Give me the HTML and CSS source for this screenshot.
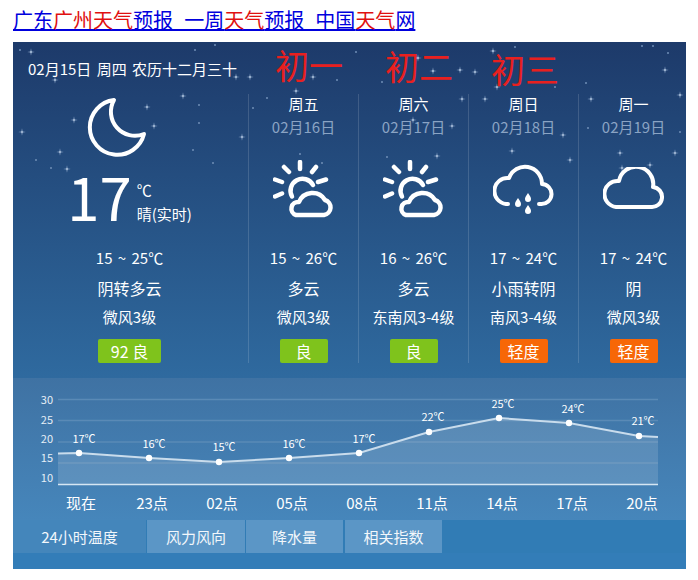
FILE: index.html
```html
<!DOCTYPE html>
<html lang="zh-CN">
  <head>
    <meta charset="utf-8" />
    <meta name="viewport" content="width=device-width, initial-scale=1" />
    <title>广东广州天气预报</title>
    <link rel="stylesheet" href="styles.css">
  </head>
  <body>
    <!-- Page title -->
    <h1 class="page-title">
      <a href="#">广东<em>广州天气</em>预报_一周<em>天气</em>预报_中国<em>天气</em>网</a>
    </h1>

    <svg class="icon-defs" width="0" height="0" aria-hidden="true">
      <defs>
        <symbol id="star" viewBox="-5 -5 10 10" overflow="visible">
          <path d="M0 -3.800L.6 -.6L3.800 0L.6 .6L0 3.800L-.6 .6L-3.800 0L-.6 -.6Z" fill="#8fa8ca" />
          <circle r="1" fill="#a6bbd6" />
        </symbol>
        <symbol id="dot" viewBox="-2 -2 4 4" overflow="visible">
          <circle r="1" fill="#6f8eb6" />
        </symbol>
        <symbol id="sun-cloud" viewBox="0 0 62 60">
          <g fill="none" stroke="#fff" stroke-width="4.500" stroke-linecap="round" stroke-linejoin="round">
            <path d="M27 2V9M11 7L16 12M43 7L39 12M2 19.500L9 22M53 19.500L45 22M2 36.500L9 33.500" />
            <path d="M19 36.500A11 11 0 1 1 40 25" />
            <path d="M23 55H51A7.700 7.700 0 0 0 52 40A14.600 14.600 0 0 0 26 42A6.700 6.700 0 0 0 23 55Z" />
          </g>
        </symbol>
        <symbol id="rain-cloud" viewBox="0 0 62 60">
          <g fill="none" stroke="#fff" stroke-width="4" stroke-linecap="round" stroke-linejoin="round">
            <path d="M15 40H13A13 13 0 0 1 16 14A17 17 0 0 1 49 20A10 10 0 0 1 48 40H46" />
          </g>
          <path d="M25 34C23 37 22 38 22 40A3 3 0 0 0 28 40C28 38 27 37 25 34ZM35 29C33 32 32 33 32 35A3 3 0 0 0 38 35C38 33 37 32 35 29ZM35 41C33 44 32 45 32 47A3 3 0 0 0 38 47C38 45 37 44 35 41Z" fill="#fff" />
        </symbol>
        <symbol id="cloud" viewBox="0 0 62 60">
          <path d="M13 40H48A10 10 0 0 0 50 20A17 17 0 0 0 16 14A13 13 0 0 0 13 40Z" fill="none" stroke="#fff" stroke-width="4" stroke-linejoin="round" />
        </symbol>
      </defs>
    </svg>

    <div class="weather">
      <!-- Today and the next four days -->
      <section class="forecast">
        <svg class="stars" width="673" height="336" viewBox="13 42 673 336" aria-hidden="true">
          <use href="#star" x="26" y="47" width="10" height="10" />
          <use href="#dot" x="18" y="48" width="4" height="4" />
          <use href="#star" x="50" y="75" width="10" height="10" />
          <use href="#star" x="178" y="91" width="10" height="10" />
          <use href="#star" x="142" y="102" width="10" height="10" />
          <use href="#dot" x="197" y="103" width="4" height="4" />
          <use href="#star" x="69" y="115" width="10" height="10" />
          <use href="#star" x="149" y="121" width="10" height="10" />
          <use href="#dot" x="197" y="121" width="4" height="4" />
          <use href="#star" x="17" y="127" width="10" height="10" />
          <use href="#star" x="237" y="132" width="10" height="10" />
          <use href="#star" x="55" y="147" width="10" height="10" />
          <use href="#dot" x="34" y="158" width="4" height="4" />
          <use href="#star" x="62" y="164" width="10" height="10" />
          <use href="#dot" x="49" y="166" width="4" height="4" />
          <use href="#dot" x="191" y="148" width="4" height="4" />
          <use href="#dot" x="211" y="161" width="4" height="4" />
          <use href="#dot" x="213" y="43" width="4" height="4" />
          <use href="#dot" x="193" y="48" width="4" height="4" />
          <use href="#star" x="231" y="72" width="10" height="10" />
          <use href="#star" x="245" y="72" width="10" height="10" />
          <use href="#star" x="291" y="86" width="10" height="10" />
          <use href="#dot" x="265" y="96" width="4" height="4" />
          <use href="#star" x="308" y="72" width="10" height="10" />
          <use href="#dot" x="335" y="78" width="4" height="4" />
          <use href="#dot" x="251" y="106" width="4" height="4" />
          <use href="#dot" x="298" y="152" width="4" height="4" />
          <use href="#dot" x="320" y="161" width="4" height="4" />
          <use href="#dot" x="354" y="50" width="4" height="4" />
          <use href="#star" x="413" y="53" width="10" height="10" />
          <use href="#star" x="428" y="66" width="10" height="10" />
          <use href="#star" x="455" y="65" width="10" height="10" />
          <use href="#star" x="470" y="67" width="10" height="10" />
          <use href="#star" x="488" y="46" width="10" height="10" />
          <use href="#dot" x="513" y="45" width="4" height="4" />
          <use href="#star" x="492" y="82" width="10" height="10" />
          <use href="#dot" x="553" y="85" width="4" height="4" />
          <use href="#dot" x="380" y="80" width="4" height="4" />
          <use href="#star" x="457" y="94" width="10" height="10" />
          <use href="#star" x="480" y="94" width="10" height="10" />
          <use href="#star" x="586" y="94" width="10" height="10" />
          <use href="#star" x="408" y="115" width="10" height="10" />
          <use href="#star" x="447" y="121" width="10" height="10" />
          <use href="#star" x="558" y="130" width="10" height="10" />
          <use href="#dot" x="586" y="126" width="4" height="4" />
          <use href="#star" x="675" y="90" width="10" height="10" />
          <use href="#dot" x="678" y="130" width="4" height="4" />
          <use href="#star" x="660" y="65" width="10" height="10" />
          <use href="#dot" x="640" y="44" width="4" height="4" />
          <use href="#dot" x="651" y="44" width="4" height="4" />
          <use href="#dot" x="666" y="51" width="4" height="4" />
          <use href="#dot" x="584" y="81" width="4" height="4" />
          <use href="#star" x="432" y="151" width="10" height="10" />
          <use href="#dot" x="385" y="155" width="4" height="4" />
          <use href="#star" x="507" y="146" width="10" height="10" />
          <use href="#star" x="565" y="155" width="10" height="10" />
          <use href="#star" x="615" y="148" width="10" height="10" />
          <use href="#star" x="670" y="148" width="10" height="10" />
          <use href="#star" x="645" y="160" width="10" height="10" />
          <use href="#star" x="617" y="163" width="10" height="10" />
        </svg>

        <div class="today">
          <div class="today-date">02月15日 周四 农历十二月三十</div>
          <svg class="moon" width="64" height="64" viewBox="0 0 64 64" aria-hidden="true">
            <path d="M28 4A27.500 27.500 0 1 0 58 38A24 24 0 0 1 28 4Z" fill="none" stroke="#fff" stroke-width="4" stroke-linejoin="round" />
          </svg>
          <div class="today-now">
            <span class="today-temp">17</span>
            <div class="today-note">
              <span class="today-unit">℃</span>
              <span>晴(实时)</span>
            </div>
          </div>
          <div class="row-temp">15 ~ 25℃</div>
          <div class="row-sky">阴转多云</div>
          <div class="row-wind">微风3级</div>
          <span class="aqi aqi-good aqi-wide">92 良</span>
        </div>

        <div class="day">
          <div class="day-name">周五</div>
          <div class="day-date">02月16日</div>
          <svg class="day-icon"><use href="#sun-cloud" /></svg>
          <div class="row-temp">15 ~ 26℃</div>
          <div class="row-sky">多云</div>
          <div class="row-wind">微风3级</div>
          <span class="aqi aqi-good">良</span>
        </div>

        <div class="day">
          <div class="day-name">周六</div>
          <div class="day-date">02月17日</div>
          <svg class="day-icon"><use href="#sun-cloud" /></svg>
          <div class="row-temp">16 ~ 26℃</div>
          <div class="row-sky">多云</div>
          <div class="row-wind">东南风3-4级</div>
          <span class="aqi aqi-good">良</span>
        </div>

        <div class="day">
          <div class="day-name">周日</div>
          <div class="day-date">02月18日</div>
          <svg class="day-icon day-icon-rain"><use href="#rain-cloud" /></svg>
          <div class="row-temp">17 ~ 24℃</div>
          <div class="row-sky">小雨转阴</div>
          <div class="row-wind">南风3-4级</div>
          <span class="aqi aqi-light">轻度</span>
        </div>

        <div class="day">
          <div class="day-name">周一</div>
          <div class="day-date">02月19日</div>
          <svg class="day-icon day-icon-cloud"><use href="#cloud" /></svg>
          <div class="row-temp">17 ~ 24℃</div>
          <div class="row-sky">阴</div>
          <div class="row-wind">微风3级</div>
          <span class="aqi aqi-light">轻度</span>
        </div>

        <!-- Lunar dates written over the banner -->
        <span class="lunar lunar-1">初一</span>
        <span class="lunar lunar-2">初二</span>
        <span class="lunar lunar-3">初三</span>
      </section>

      <!-- 24 hour temperature chart -->
      <section class="chart">
        <svg width="673" height="142" viewBox="13 378 673 142" role="img" aria-label="24小时温度">
          <g class="chart-grid">
            <path d="M58 399.500H658M58 420.500H658M58 442H658M58 463H658" />
          </g>
          <path class="chart-area" d="M58 453L79 453L149 458L219 462L289 458L359 453L429 432L499 418L569 423L639 436L658 437V484.500H58Z" />
          <path class="chart-base" d="M58 484.500H658" />
          <path class="chart-line" d="M58 453.500L79 453L149 458L219 462L289 458L359 453L429 432L499 418L569 423L639 436L658 437" />
          <g class="chart-dots">
            <circle cx="79" cy="453" r="3.200" />
            <circle cx="149" cy="458" r="3.200" />
            <circle cx="219" cy="462" r="3.200" />
            <circle cx="289" cy="458" r="3.200" />
            <circle cx="359" cy="453" r="3.200" />
            <circle cx="429" cy="432" r="3.200" />
            <circle cx="499" cy="418" r="3.200" />
            <circle cx="569" cy="423" r="3.200" />
            <circle cx="639" cy="436" r="3.200" />
          </g>
          <g class="chart-y">
            <text x="53" y="404">30</text>
            <text x="53" y="424">25</text>
            <text x="53" y="443">20</text>
            <text x="53" y="462">15</text>
            <text x="53" y="482">10</text>
          </g>
          <g class="chart-values">
            <text x="84" y="443">17℃</text>
            <text x="154" y="448">16℃</text>
            <text x="224" y="451">15℃</text>
            <text x="294" y="448">16℃</text>
            <text x="364" y="443">17℃</text>
            <text x="433" y="421">22℃</text>
            <text x="503" y="408">25℃</text>
            <text x="573" y="413">24℃</text>
            <text x="643" y="425">21℃</text>
          </g>
          <g class="chart-hours">
            <text x="81" y="509">现在</text>
            <text x="152" y="509">23点</text>
            <text x="222" y="509">02点</text>
            <text x="292" y="509">05点</text>
            <text x="362" y="509">08点</text>
            <text x="432" y="509">11点</text>
            <text x="502" y="509">14点</text>
            <text x="572" y="509">17点</text>
            <text x="642" y="509">20点</text>
          </g>
        </svg>
      </section>

      <!-- Chart tabs -->
      <nav class="tabs">
        <a class="tab tab-active" href="#">24小时温度</a>
        <a class="tab tab-wind" href="#">风力风向</a>
        <a class="tab" href="#">降水量</a>
        <a class="tab tab-index" href="#">相关指数</a>
      </nav>
    </div>
  </body>
</html>
```

FILE: styles.css
```css
/* Page */
body {
  margin: 0;
  padding: 0 12px 0 13px;
  font-family: "Noto Sans CJK SC", "Noto Sans", sans-serif;
}

.page-title {
  margin: 0;
  height: 42px;
  font-size: 20px;
  font-weight: 400;
  line-height: 40px;
}

.page-title a {
  color: #0000dd;
  text-underline-offset: 1px;
}

.page-title em {
  color: #e01010;
  font-style: normal;
}

.icon-defs {
  display: block;
  height: 0;
}

.weather {
  width: 673px;
  height: 527px;
  color: #fff;
  background: #337db8;
}

/* Forecast banner */
.forecast {
  position: relative;
  display: flex;
  height: 336px;
  background: linear-gradient(#1d3a6a, #2f6a9f);
}

.stars {
  position: absolute;
  top: 0;
  left: 0;
}

.today {
  position: relative;
  display: flex;
  flex-direction: column;
  align-items: center;
  width: 235px;
  flex: none;
  box-sizing: border-box;
  padding-right: 2px;
}

.today-date {
  align-self: flex-start;
  margin-left: 15px;
  font-size: 15px;
  line-height: 54px;
  height: 54px;
  white-space: nowrap;
  word-spacing: 2px;
}

.moon {
  display: block;
  flex: none;
  margin-left: -23px;
}

.today-now {
  display: flex;
  align-items: center;
  gap: 5px;
  height: 83px;
  flex: none;
}

.today-temp {
  margin-bottom: 12px;
  font-size: 58px;
  line-height: 60px;
}

.today-note {
  display: flex;
  flex-direction: column;
  font-size: 15px;
  line-height: 24px;
}

.day {
  position: relative;
  display: flex;
  flex-direction: column;
  align-items: center;
  width: 110px;
  height: 269px;
  flex: none;
  margin-top: 52px;
  box-sizing: border-box;
  border-left: 1px solid rgba(255, 255, 255, 0.14);
}

.day-name {
  font-size: 15px;
  line-height: 20px;
}

.day-date {
  font-size: 15px;
  line-height: 26px;
  color: #8ba4c4;
}

.day-icon {
  display: block;
  flex: none;
  width: 62px;
  height: 60px;
  margin: 20px 0 23px;
}

.day-icon-rain {
  margin: 24px 0 19px;
}

.day-icon-cloud {
  margin: 27px 0 16px;
}

.row-temp,
.row-sky {
  font-size: 15px;
  line-height: 30px;
  white-space: nowrap;
}

.row-temp {
  word-spacing: 2px;
}

.row-sky {
  font-size: 16px;
}

.row-wind {
  font-size: 15px;
  line-height: 28px;
  white-space: nowrap;
}

.aqi {
  display: block;
  width: 48px;
  height: 24px;
  margin-top: 8px;
  border-radius: 2px;
  font-size: 16px;
  line-height: 24px;
  text-align: center;
}

.aqi-wide {
  width: 63px;
}

.aqi-good {
  background: #7fc31c;
}

.aqi-light {
  background: #f76707;
}

/* Lunar dates over the banner */
.lunar {
  position: absolute;
  font-size: 34px;
  line-height: 40px;
  color: #e8201f;
}

.lunar-1 {
  top: 3px;
  left: 262px;
}

.lunar-2 {
  top: 4px;
  left: 372px;
}

.lunar-3 {
  top: 7px;
  left: 478px;
}

/* Chart */
.chart {
  height: 142px;
  background: linear-gradient(#3f72a3, #4686bb);
}

.chart svg {
  display: block;
}

.chart-grid path {
  fill: none;
  stroke: #5a8ab6;
  stroke-width: 1.5;
}

.chart-area {
  fill: rgba(255, 255, 255, 0.13);
}

.chart-base {
  fill: none;
  stroke: #d5e6f3;
  stroke-width: 1.5;
}

.chart-line {
  fill: none;
  stroke: #c9dcec;
  stroke-width: 2;
}

.chart-dots circle {
  fill: #fff;
}

.chart svg text {
  fill: #fff;
  text-anchor: middle;
}

.chart svg .chart-y text {
  font-size: 11px;
  text-anchor: end;
  fill: #e6eff7;
}

.chart-values text {
  font-size: 11px;
}

.chart-hours text {
  font-size: 15px;
}

/* Tabs */
.tabs {
  display: flex;
  gap: 1px;
  height: 33px;
  background: #317cb5;
}

.tab {
  width: 97px;
  font-size: 15px;
  line-height: 33px;
  text-align: center;
  text-decoration: none;
  color: #f2f7fb;
  background: #5b96c6;
}

.tab-active {
  width: 133px;
  background: #4486bb;
}

.tab-wind {
  width: 98px;
}

.tab-index {
  margin-left: 1px;
}
```
